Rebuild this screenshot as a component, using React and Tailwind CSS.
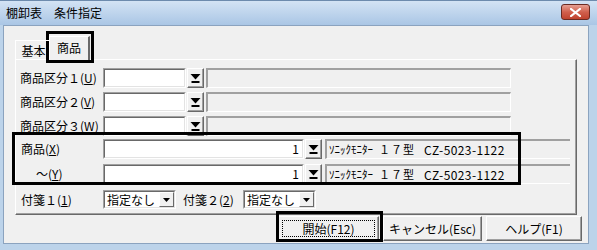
import React from 'react';

const font = { fontFamily: '"Noto Sans CJK JP", "Noto Sans", sans-serif' };

function DropBtn() {
  return (
    <div className="w-[17px] h-[20px] bg-[#f0f0f0] border border-t-white border-l-white border-r-[#696969] border-b-[#696969] shadow-[inset_-1px_-1px_0_#a0a0a0] flex items-center justify-center">
      <svg width="11" height="11" viewBox="0 0 11 11">
        <polygon points="0.5,1 10.5,1 5.5,6.5" fill="#000" />
        <rect x="1.5" y="8" width="8" height="2" fill="#000" />
      </svg>
    </div>
  );
}

function Sunken({ className = '', children }) {
  return (
    <div className={`border border-t-[#a0a0a0] border-l-[#a0a0a0] border-r-white border-b-white ${className}`}>
      <div className="w-full h-full border border-t-[#696969] border-l-[#696969] border-r-[#e3e3e3] border-b-[#e3e3e3]">
        {children}
      </div>
    </div>
  );
}

function Label({ children, className = '' }) {
  return <div className={`w-[83px] shrink-0 text-[12px] leading-none text-black whitespace-nowrap ${className}`}>{children}</div>;
}

function KubunRow({ n, k, mt }) {
  return (
    <div className={`flex items-center h-[20px] ${mt}`}>
      <Label>商品区分{n}(<u>{k}</u>)</Label>
      <Sunken className="w-[83px] h-[20px]"><div className="w-full h-full bg-white" /></Sunken>
      <div className="ml-[1px]"><DropBtn /></div>
      <div className="ml-[2px] w-[305px] h-[20px] border-t-2 border-l-2 border-t-[#a0a0a0] border-l-[#a0a0a0] border-r border-b border-r-white border-b-white bg-[#f0f0f0]" />
    </div>
  );
}

function ItemRow({ label, mt }) {
  return (
    <div className={`flex items-center h-[20px] ${mt}`}>
      <Label>{label}</Label>
      <Sunken className="w-[201px] h-[20px]">
        <div className="w-full h-full bg-white text-[12px] leading-[16px] text-right pr-[3px]">1</div>
      </Sunken>
      <div className="ml-[1px]"><DropBtn /></div>
      <div className="ml-[3px] w-[245px] h-[20px] border-t-2 border-l-2 border-t-[#a0a0a0] border-l-[#a0a0a0] border-b border-b-white bg-[#f0f0f0] flex items-center pl-[2px] whitespace-nowrap">
        <span className="text-[11px] leading-none">ｿﾆｯｸﾓﾆﾀｰ</span>
        <span className="ml-[6px] text-[11px] leading-none tracking-[1px]">１７型</span>
        <span className="ml-[9px] text-[12px] leading-none tracking-[0.4px]">CZ-5023-1122</span>
      </div>
    </div>
  );
}

function Select({ w }) {
  return (
    <Sunken className={`${w} h-[19px]`}>
      <div className="w-full h-full bg-white flex items-center justify-between">
        <span className="text-[12px] leading-none pl-[2px]">指定なし</span>
        <div className="w-[15px] h-[15px] bg-[#f0f0f0] border border-t-white border-l-white border-r-[#696969] border-b-[#696969] flex items-center justify-center">
          <svg width="7" height="4" viewBox="0 0 7 4"><polygon points="0,0 7,0 3.5,4" fill="#000" /></svg>
        </div>
      </div>
    </Sunken>
  );
}

function Btn({ w, children, focus }) {
  return (
    <div className={`${w} h-[25px] bg-[#f0f0f0] border border-t-white border-l-white border-r-[#696969] border-b-[#696969] shadow-[inset_-1px_-1px_0_#a0a0a0] flex items-center justify-center p-[3px]`}>
      <div className={`w-full h-full flex items-center justify-center text-[12px] leading-none ${focus ? 'border border-dotted border-black' : ''}`}>
        {children}
      </div>
    </div>
  );
}

export default function App() {
  return (
    <div className="relative w-[597px] h-[250px] overflow-hidden bg-[#bcd3ea] flex flex-col" style={font}>
      <div className="h-[25px] shrink-0 bg-gradient-to-b from-[#d3e3f4] to-[#aac6e5] flex items-center pl-[6px] pr-[7px] border-t border-t-[#6d8bad]">
        <span className="text-[12px] leading-none text-black">棚卸表　条件指定</span>
        <div className="ml-auto mt-[-2px] w-[29px] h-[16px] rounded-[3px] border border-[#6b2b22] bg-gradient-to-b from-[#e59f92] via-[#d1604d] to-[#c0432e] flex items-center justify-center">
          <svg width="11" height="9" viewBox="0 0 11 9">
            <path d="M1 1 L10 8 M10 1 L1 8" stroke="#fff" strokeWidth="2.2" strokeLinecap="square" />
          </svg>
        </div>
      </div>
      <div className="flex-1 flex pl-[3px] pr-[8px] pb-[6px]">
        <div className="flex-1 bg-[#f0f0f0] border border-[#8ba3bf] flex flex-col pl-[11px] pt-[8px] text-black">
          <div className="flex items-end h-[25px] relative z-10">
            <div className="w-[35px] h-[20px] border-t border-l border-t-white border-l-white border-r border-r-[#a0a0a0] flex items-center justify-center text-[12px] leading-none mb-[-1px] pl-[2px]">基本</div>
            <div className="ml-[-1px] w-[41px] h-[24px] bg-[#f0f0f0] border-t border-l border-t-white border-l-white border-r-2 border-r-[#696969] flex items-center justify-center text-[12px] leading-none mb-[-1px] pb-[2px]">商品</div>
          </div>
          <div className="w-[562px] h-[156px] border border-t-white border-l-white border-r-[#696969] border-b-[#696969] shadow-[inset_-1px_-1px_0_#a0a0a0] pl-[4px] flex flex-col">
            <KubunRow n="１" k="U" mt="mt-[8px]" />
            <KubunRow n="２" k="V" mt="mt-[4px]" />
            <KubunRow n="３" k="W" mt="mt-[4px]" />
            <ItemRow label={<span className="pl-[1px]">商品(<u>X</u>)</span>} mt="mt-[3px]" />
            <ItemRow label={<span className="pl-[16px]">～(<u>Y</u>)</span>} mt="mt-[5px]" />
            <div className="flex items-center h-[19px] mt-[6px]">
              <Label><span className="pl-[1px]">付箋１(<u>1</u>)</span></Label>
              <Select w="w-[73px]" />
              <span className="ml-[7px] text-[12px] leading-none w-[60px]">付箋２(<u>2</u>)</span>
              <Select w="w-[73px]" />
            </div>
          </div>
          <div className="flex mt-[1px] pl-[263px] gap-[4px]">
            <Btn w="w-[101px]" focus>開始(F12)</Btn>
            <Btn w="w-[99px]">キャンセル(Esc)</Btn>
            <Btn w="w-[96px]">ヘルプ(F1)</Btn>
          </div>
        </div>
      </div>
      <div className="absolute left-[46px] top-[31px] w-[48px] h-[32px] border-[3px] border-black pointer-events-none" />
      <div className="absolute left-[12px] top-[132px] w-[509px] h-[53px] border-[3px] border-black pointer-events-none" />
      <div className="absolute left-[276px] top-[211px] w-[107px] h-[31px] border-[3px] border-black pointer-events-none" />
    </div>
  );
}
